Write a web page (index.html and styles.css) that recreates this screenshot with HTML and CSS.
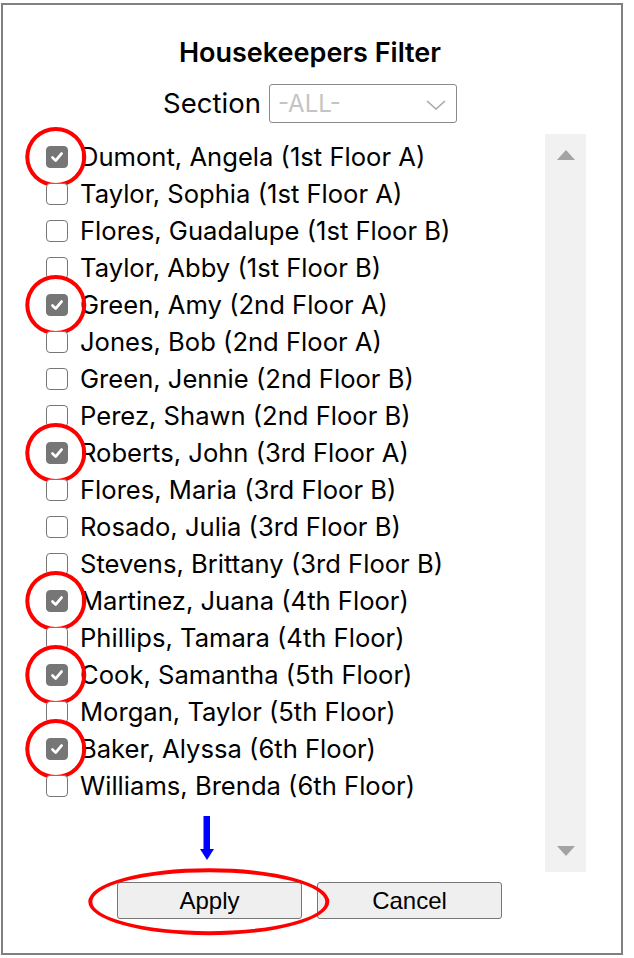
FILE: index.html
```html
<!DOCTYPE html>
<html lang="en">
<head>
<meta charset="utf-8">
<title>Housekeepers Filter</title>
<link rel="stylesheet" href="styles.css">
</head>
<body>
<div class="dialog">
  <h1 class="title">Housekeepers Filter</h1>
  <div class="section-row">
    <span class="section-label">Section</span>
    <div class="select">
      <span class="select-value">-ALL-</span>
      <svg class="chev" width="20" height="10" viewBox="0 0 20 10"><polyline points="1,1 10,9 19,1" fill="none" stroke="#a9a9a9" stroke-width="1.6"/></svg>
    </div>
  </div>
  <div class="list-area">
    <ul class="list">
      <li class="item checked"><span class="cb"><svg viewBox="0 0 22 22"><path d="M6 11.5 9.5 15 16 7.2"/></svg></span><span class="name">Dumont, Angela (1st Floor A)</span></li>
      <li class="item"><span class="cb"></span><span class="name">Taylor, Sophia (1st Floor A)</span></li>
      <li class="item"><span class="cb"></span><span class="name">Flores, Guadalupe (1st Floor B)</span></li>
      <li class="item"><span class="cb"></span><span class="name">Taylor, Abby (1st Floor B)</span></li>
      <li class="item checked"><span class="cb"><svg viewBox="0 0 22 22"><path d="M6 11.5 9.5 15 16 7.2"/></svg></span><span class="name">Green, Amy (2nd Floor A)</span></li>
      <li class="item"><span class="cb"></span><span class="name">Jones, Bob (2nd Floor A)</span></li>
      <li class="item"><span class="cb"></span><span class="name">Green, Jennie (2nd Floor B)</span></li>
      <li class="item"><span class="cb"></span><span class="name">Perez, Shawn (2nd Floor B)</span></li>
      <li class="item checked"><span class="cb"><svg viewBox="0 0 22 22"><path d="M6 11.5 9.5 15 16 7.2"/></svg></span><span class="name">Roberts, John (3rd Floor A)</span></li>
      <li class="item"><span class="cb"></span><span class="name">Flores, Maria (3rd Floor B)</span></li>
      <li class="item"><span class="cb"></span><span class="name">Rosado, Julia (3rd Floor B)</span></li>
      <li class="item"><span class="cb"></span><span class="name">Stevens, Brittany (3rd Floor B)</span></li>
      <li class="item checked"><span class="cb"><svg viewBox="0 0 22 22"><path d="M6 11.5 9.5 15 16 7.2"/></svg></span><span class="name">Martinez, Juana (4th Floor)</span></li>
      <li class="item"><span class="cb"></span><span class="name">Phillips, Tamara (4th Floor)</span></li>
      <li class="item checked"><span class="cb"><svg viewBox="0 0 22 22"><path d="M6 11.5 9.5 15 16 7.2"/></svg></span><span class="name">Cook, Samantha (5th Floor)</span></li>
      <li class="item"><span class="cb"></span><span class="name">Morgan, Taylor (5th Floor)</span></li>
      <li class="item checked"><span class="cb"><svg viewBox="0 0 22 22"><path d="M6 11.5 9.5 15 16 7.2"/></svg></span><span class="name">Baker, Alyssa (6th Floor)</span></li>
      <li class="item"><span class="cb"></span><span class="name">Williams, Brenda (6th Floor)</span></li>
    </ul>
    <div class="scrollbar">
      <span class="arrow-up"></span>
      <span class="arrow-down"></span>
    </div>
  </div>
  <div class="buttons">
    <span class="apply-wrap"><button class="btn" type="button">Apply</button></span>
    <button class="btn" type="button">Cancel</button>
  </div>
  <svg class="pointer" width="14" height="44" viewBox="0 0 14 44"><rect x="3.5" y="0" width="6.5" height="34" fill="#0000ff"/><polygon points="0,33 14,33 7,44" fill="#0000ff"/></svg>
</div>
</body>
</html>
```

FILE: styles.css
```css
* { box-sizing: border-box; }

html, body {
  margin: 0;
  padding: 0;
  background: #ffffff;
}

body {
  font-family: "Inter", "Noto Sans", "DejaVu Sans", sans-serif;
  color: #000;
}

.dialog {
  position: relative;
  margin: 3px 0 0 1px;
  width: 622px;
  height: 952px;
  border: 2px solid #808080;
  display: flex;
  flex-direction: column;
}

.title {
  margin: 0;
  padding-top: 33px;
  font-size: 27px;
  font-weight: 600;
  line-height: 30px;
  text-align: center;
  padding-right: 4px;
}

.section-row {
  margin-top: 16px;
  height: 39px;
  display: flex;
  align-items: center;
  justify-content: center;
  gap: 8px;
  padding-right: 4px;
}

.section-label {
  font-size: 27.5px;
  line-height: 39px;
}

.select {
  width: 188px;
  height: 39px;
  border: 1px solid #8a8a8a;
  border-radius: 3px;
  display: flex;
  align-items: center;
  justify-content: space-between;
  padding: 0 10px 0 8px;
}

.select-value {
  font-size: 24px;
  color: #c4c4c4;
}

.chev { margin-top: 2px; }

.list-area {
  margin-top: 11px;
  height: 738px;
  display: flex;
  padding-left: 43px;
  padding-right: 35px;
}

.list {
  flex: 1;
  margin: 0;
  padding: 4px 0 0;
  list-style: none;
}

.item {
  height: 37px;
  display: flex;
  align-items: center;
  font-size: 25.6px;
  white-space: nowrap;
}

.cb {
  position: relative;
  flex: none;
  width: 22px;
  height: 22px;
  margin-right: 12px;
  border: 1.5px solid #767676;
  border-radius: 4px;
  background: #fff;
}

.cb svg {
  display: block;
  width: 100%;
  height: 100%;
}

.cb path {
  fill: none;
  stroke: #fff;
  stroke-width: 3;
  stroke-linecap: round;
  stroke-linejoin: round;
}

.item.checked .cb {
  background: #767676;
  border-color: #767676;
}

.item.checked .cb::after {
  content: "";
  position: absolute;
  left: 50%;
  top: 50%;
  width: 53px;
  height: 52px;
  transform: translate(-52%, -50%);
  border: 4.5px solid #f00;
  border-radius: 50%;
}

.scrollbar {
  flex: none;
  width: 41px;
  height: 738px;
  background: #f1f1f1;
  display: flex;
  flex-direction: column;
  justify-content: space-between;
  align-items: center;
  padding: 16px 0;
}

.arrow-up {
  width: 0;
  height: 0;
  border-left: 9.5px solid transparent;
  border-right: 9.5px solid transparent;
  border-bottom: 10px solid #a3a3a3;
}

.arrow-down {
  width: 0;
  height: 0;
  border-left: 9.5px solid transparent;
  border-right: 9.5px solid transparent;
  border-top: 10px solid #a3a3a3;
}

.buttons {
  margin-top: 10px;
  display: flex;
  justify-content: center;
  gap: 15px;
  padding-right: 5px;
}

.apply-wrap {
  position: relative;
  display: block;
}

.apply-wrap::after {
  content: "";
  position: absolute;
  left: 50%;
  top: 50%;
  width: 233px;
  height: 59px;
  transform: translate(-50.5%, -49%);
  border: 4.5px solid #f00;
  border-radius: 50%;
  pointer-events: none;
}

.btn {
  display: block;
  width: 185px;
  height: 37px;
  margin: 0;
  padding: 0;
  background: #efefef;
  border: 1px solid #767676;
  border-radius: 3px;
  font-family: "Liberation Sans", Arial, sans-serif;
  font-size: 24px;
  color: #000;
}

.pointer {
  position: absolute;
  left: 197px;
  top: 811px;
}
```
